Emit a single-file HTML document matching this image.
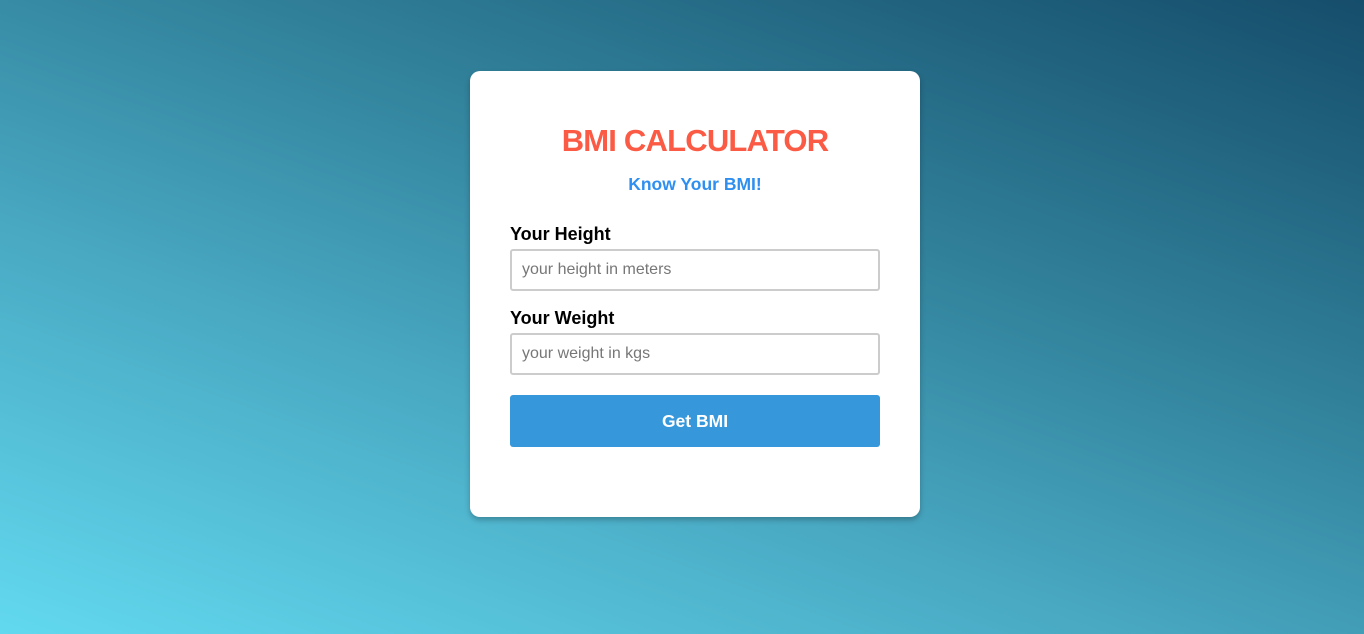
<!DOCTYPE html>
<html><head><style>
html,body{margin:0;height:634px;width:1364px;overflow:hidden}
body{background:linear-gradient(20deg,#62d9ef 0%,#4aaac4 35%,#34869f 60%,#154d6b 100%);font-family:"Liberation Sans",sans-serif;position:relative}
.card{position:absolute;left:470px;top:71px;width:450px;height:446px;background:#fff;border-radius:10px;box-shadow:0 3px 6px rgba(0,0,0,.25)}
h1{position:absolute;top:52px;left:0;width:100%;text-align:center;margin:0;font-size:31px;color:#fb5b45;font-weight:bold;letter-spacing:-0.8px}
h2{position:absolute;top:103px;left:0;width:100%;text-align:center;margin:0;font-size:17.5px;color:#2f8ff0;font-weight:bold}
label{position:absolute;left:40px;font-size:18px;font-weight:bold;color:#000}
.in{position:absolute;left:40px;height:38px;border:2px solid #ccc;border-radius:3px;font-size:16px;color:#777;line-height:38px;padding-left:10px;width:356px}
.btn{position:absolute;left:40px;top:324px;width:370px;height:52px;background:#3797db;border-radius:3px;color:#fff;text-align:center;line-height:53px;font-size:17.5px;font-weight:bold}
</style></head><body>
<div class="card">
<h1>BMI CALCULATOR</h1>
<h2>Know Your BMI!</h2>
<label style="top:153px">Your Height</label>
<div class="in" style="top:178px">your height in meters</div>
<label style="top:237px">Your Weight</label>
<div class="in" style="top:262px">your weight in kgs</div>
<div class="btn">Get BMI</div>
</div>
</body></html>
